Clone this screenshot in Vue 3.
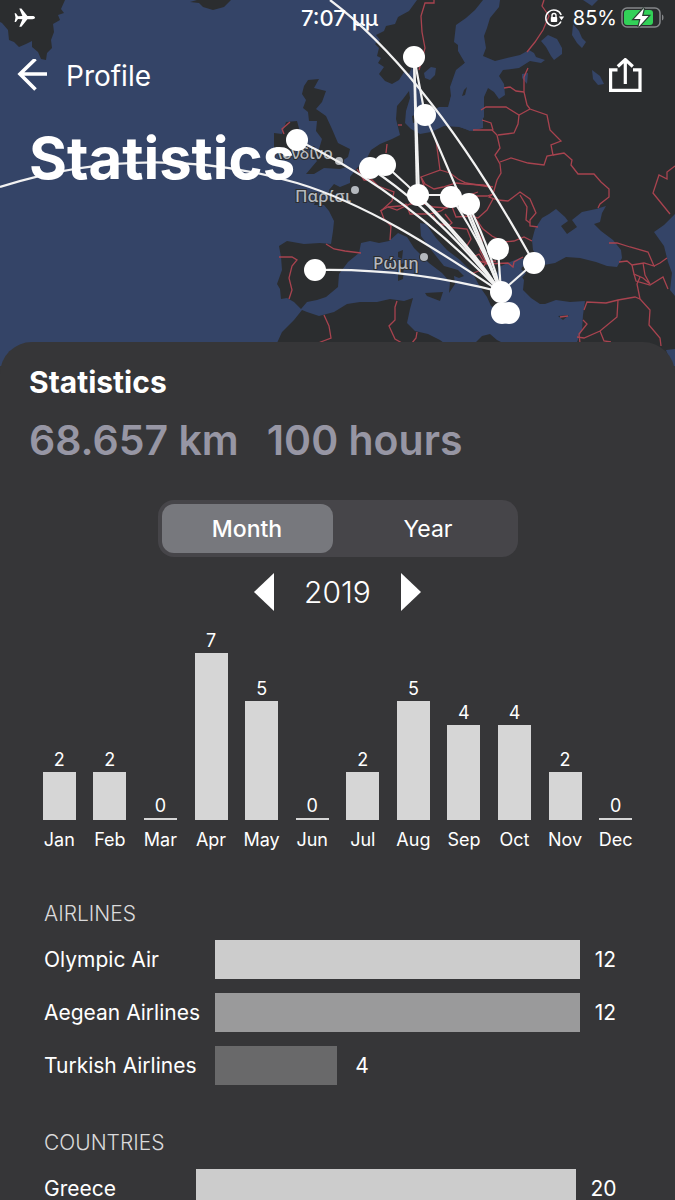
<template>
  <div class="screen">
    <header class="hero">
      <svg class="map" viewBox="0 0 675 366" preserveAspectRatio="xMidYMin slice" aria-hidden="true">
        <g class="land">
          <path v-for="(d, i) in land" :key="i" :d="d" />
        </g>
        <g class="sea">
          <path v-for="(d, i) in seas" :key="i" :d="d" />
        </g>
        <g class="land">
          <path v-for="(d, i) in islands" :key="i" :d="d" />
        </g>
        <g class="borders">
          <path v-for="(d, i) in borders" :key="i" :d="d" />
        </g>
        <g class="cities">
          <circle cx="339" cy="161" r="4" />
          <circle cx="355" cy="190" r="4" />
          <circle cx="424" cy="257" r="4" />
          <text x="272" y="159" font-size="16">Λονδίνο</text>
          <text x="295" y="202" font-size="17">Παρίσι</text>
          <text x="373" y="269" font-size="17">Ρώμη</text>
        </g>
        <g class="routes">
          <path v-for="(d, i) in routes" :key="i" :d="d" />
        </g>
        <g class="airports">
          <circle v-for="([x, y], i) in airports" :key="i" :cx="x" :cy="y" r="11" />
        </g>
      </svg>

      <div class="status">
        <div class="status-left">
          <svg width="22" height="20" viewBox="0 0 22 20" fill="#fff">
            <path d="M21 9.600c0-.9-1.200-1.600-2.600-1.600h-5L7.400.500H5.300L8.400 8 4 8.200 1.900 5.300H.600L1.500 9.600.600 14h1.300L4 11.100l4.400.200-3.100 7.400h2.100l6-7.500h5c1.400 0 2.600-.7 2.600-1.600z" />
          </svg>
        </div>
        <span class="time">7:07 μμ</span>
        <div class="status-right">
          <svg width="20" height="18" viewBox="0 0 20 18" fill="none" stroke="#fff">
            <path d="M16.200 6A8 8 0 1 0 16 12.500" stroke-width="1.500" />
            <path d="M13.800 7.400h5.400l-2.700 3.800z" fill="#fff" stroke="none" />
            <rect x="5.800" y="8" width="6.400" height="5" rx=".8" fill="#fff" stroke="none" />
            <path d="M7 8.500V6.500a2 2 0 0 1 4 0v2" stroke-width="1.400" />
          </svg>
          <span>85%</span>
          <svg class="battery" width="44" height="22" viewBox="0 0 44 22">
            <rect x="1" y="1" width="38" height="19" rx="5" fill="none" stroke="#85878a" stroke-width="1.500" />
            <path d="M41 7.500c2 .6 2 5.400 0 6z" fill="#85878a" />
            <rect x="3" y="3" width="29" height="15" rx="3" fill="#32d158" />
            <path class="bolt" d="M23 1 13 12h6.500L17.500 20 27.500 9H21z" />
          </svg>
        </div>
      </div>

      <nav class="nav">
        <button class="back" type="button">
          <svg width="30" height="34" viewBox="0 0 30 34" fill="none" stroke="#fff" stroke-width="3.600">
            <path d="M30 15H3M18.500 0 3 15l15.500 15.500" />
          </svg>
          Profile
        </button>
        <button class="share" type="button" aria-label="Share">
          <svg width="34" height="36" viewBox="0 0 34 36" fill="none" stroke="#fff" stroke-width="3.200">
            <path d="M9.500 11.800H2.600V32.400H32V11.800H25" />
            <path d="M17.300 26V2.500M9.800 8.500 17.300 1.600l7.500 6.900" />
          </svg>
        </button>
      </nav>

      <h1>Statistics</h1>
    </header>

    <main class="panel">
      <h2>Statistics</h2>
      <p class="totals">
        <span>68.657 km</span>
        <span>100 hours</span>
      </p>

      <div class="segmented">
        <button
          v-for="m in modes"
          :key="m"
          type="button"
          :class="{ active: m === mode }"
          @click="mode = m"
        >
          {{ m }}
        </button>
      </div>

      <div class="year">
        <button type="button" aria-label="Previous year" @click="year--">
          <svg width="20" height="38" viewBox="0 0 20 38"><path d="M20 0v38L0 19z" fill="#fff" /></svg>
        </button>
        <span>{{ year }}</span>
        <button type="button" aria-label="Next year" @click="year++">
          <svg width="20" height="38" viewBox="0 0 20 38"><path d="M0 0v38l20-19z" fill="#fff" /></svg>
        </button>
      </div>

      <div class="months">
        <div v-for="m in months" :key="m.name" class="month">
          <div class="column">
            <span>{{ m.flights }}</span>
            <div class="bar" :style="{ height: barHeight(m.flights) }"></div>
          </div>
          <span class="name">{{ m.name }}</span>
        </div>
      </div>

      <section v-for="g in groups" :key="g.title" class="group" :class="g.id">
        <h3>{{ g.title }}</h3>
        <div v-for="(row, i) in g.rows" :key="row.name" class="row">
          <span>{{ row.name }}</span>
          <div class="track">
            <div
              class="fill"
              :class="'shade-' + i"
              :style="{ width: (row.count / g.rows[0].count) * 100 + '%' }"
            ></div>
            <span class="count">{{ row.count }}</span>
          </div>
        </div>
      </section>
    </main>
  </div>
</template>

<script setup>
import { computed, ref } from "vue";

const modes = ["Month", "Year"];
const mode = ref("Month");
const year = ref(2019);

const months = [
  { name: "Jan", flights: 2 },
  { name: "Feb", flights: 2 },
  { name: "Mar", flights: 0 },
  { name: "Apr", flights: 7 },
  { name: "May", flights: 5 },
  { name: "Jun", flights: 0 },
  { name: "Jul", flights: 2 },
  { name: "Aug", flights: 5 },
  { name: "Sep", flights: 4 },
  { name: "Oct", flights: 4 },
  { name: "Nov", flights: 2 },
  { name: "Dec", flights: 0 },
];

const groups = [
  {
    id: "airlines",
    title: "AIRLINES",
    rows: [
      { name: "Olympic Air", count: 12 },
      { name: "Aegean Airlines", count: 12 },
      { name: "Turkish Airlines", count: 4 },
    ],
  },
  {
    id: "countries",
    title: "COUNTRIES",
    rows: [{ name: "Greece", count: 20 }],
  },
];

const maxFlights = computed(() => Math.max(...months.map((m) => m.flights)));

function barHeight(n) {
  return Math.round((n / maxFlights.value) * 167) + "px";
}

// map shapes, in the map's own 675 x 366 space
const land = [
  // Greenland / Iceland
  "M0 0H65L61 9 64 13 58 15 60 20 53 24 54 32 51 40 52 48 47 53 46 60 41 59 38 52 32 47 32 41 26 44 19 47 14 42 9 40 8 30 2 23 0 22z",
  "M190 2 197 0H231L224 7 213 10 203 7 199 3z",
  // Scandinavia
  "M417 0 409 11 398 17 395 24 386 26 384 31 376 35 380 40 375 44 379 48 377 56 381 58 378 63 384 67 379 74 385 81 392 84 399 80 404 72 409 74 412 67 415 77 420 92 423 105 431 112 439 107 449 107 451 96 450 87 456 70 466 62 484 0z",
  // mainland Europe and Asia
  "M483 0H675V366H583L577 342 582 330 583 315 585 301 570 302 556 300 545 304 540 304 531 298 523 290 524 280 520 274 522 267 536 262 520 258 510 262 499 267 497 275 503 285 507 297 505 306 499 310 491 306 487 297 480 287 472 272 460 260 447 250 436 238 426 224 420 223 421 236 432 251 444 266 458 270 464 276 459 278 454 276 455 284 449 293 450 282 442 273 429 263 414 248 407 237 398 233 389 241 379 243 370 241 361 243 359 253 348 262 339 274 338 287 326 297 317 300 307 302 301 309 294 302 287 298 281 299 280 289 277 284 282 270 281 257 279 246 287 241 304 244 320 243 331 244 333 231 334 221 329 211 324 205 314 205 316 200 329 199 329 190 334 184 340 187 350 183 350 177 357 168 366 160 371 150 380 144 392 139 400 135 398 127 396 119 397 106 403 99 409 91 410 98 406 111 405 123 411 129 420 134 431 132 444 126 459 127 472 131 483 128z",
  // north Africa
  "M277 343 282 332 294 320 302 310 307 312 319 316 334 312 347 304 360 302 377 302 390 299 404 301 413 298 410 309 407 323 415 331 428 334 440 340 444 343V366H277z",
  "M475 343 482 336 490 334 497 340 505 344V366H475z",
];

const seas = [
  // Baltic with the gulfs of Bothnia and Finland
  "M483 0H500L499 7 490 18 487 28 484 36 486 48 483 56 495 61 507 58 520 55 529 50 534 53 536 57 545 60 541 63 530 61 519 68 503 70 499 76 504 84 505 95 499 99 494 92 488 88 484 97 484 117 478 126 470 131 458 126 444 126 432 112 448 107 451 96 451 86 457 70 465 63 458 51 458 45 454 42 456 25 466 18 475 10z",
  "M424 73 431 67 436 68 435 75 430 80 425 78z",
  // Ladoga, Onega and the small lakes
  "M541 41 548 35 557 39 562 48 562 54 554 60 551 56 546 47z",
  "M573 24 579 31 582 38 586 42 582 48 577 43 572 35z",
  "M583 0H598L592 6z",
  "M592 70 600 76 604 84 598 85 593 79z",
  "M522 74 528 73 527 84 522 78z",
  // Black Sea and Azov
  "M544 265 533 250 532 240 535 229 542 218 549 214 556 209 565 217 568 221 561 226 567 234 577 227 572 220 582 212 596 209 606 206 602 213 600 222 594 224 601 231 613 240 621 250 622 258 617 267 607 266 596 262 580 258 566 257 555 263z",
  // Caspian
  "M675 214 664 225 654 232 664 246 668 262 672 273 670 290 675 296z",
  // Aegean
  "M498 268 515 265 526 273 520 280 525 298 534 304 529 309 505 309 506 295 502 285 498 277z",
  "M666 350 675 349V366H672z",
];

const islands = [
  // Britain and Ireland
  "M308 80 319 79 314 88 326 91 322 102 316 109 326 116 332 129 338 143 350 149 348 157 336 165 350 166 340 169 324 168 314 174 306 174 317 161 311 153 319 149 322 139 316 131 317 121 309 121 308 112 303 108 306 100 302 94 304 86z",
  "M274 133 282 134 286 122 297 121 300 132 297 147 285 153 274 149z",
  // Corsica, Sardinia, Sicily, the Danish islands, Gotland, Cyprus
  "M398 252 403 250 402 259 398 257z",
  "M398 265 404 263 403 279 398 281z",
  "M425 293 443 292 440 301 427 296z",
  "M412 116 420 113 419 122 413 123z",
  "M464 90 467 87 465 95 462 96z",
  "M558 316 569 315 563 320z",
];

const borders = [
  "M434 0V3L425 3 421 16 422 32 425 48 419 70",
  "M544 0 542 6 549 16 543 30 535 42 527 52",
  "M528 68 524 77 524 92 527 105 530 109 547 115 550 130 561 141 551 145 553 155 547 156 544 165 528 163 511 158 500 162",
  "M504 88 510 87 516 91 524 92",
  "M481 110 486 107H506L519 115 530 109",
  "M519 115 518 124 514 133 498 135",
  "M473 130 492 130 497 135 500 148 495 155 500 164 501 173 497 180 493 194 489 197 498 200 508 201 520 192 530 199 536 213 530 220 530 226 538 227",
  "M482 120 491 123 493 130",
  "M553 155 564 153 572 160 571 165 578 174H594L601 182 609 189V197L600 204 598 208",
  "M387 144 386 153",
  "M436 140 438 155 440 170 421 177 425 184 434 189 443 187 456 183 465 184 483 185 493 187",
  "M440 170 450 173 458 179 466 183 490 187 493 194 487 196 470 196",
  "M357 169 364 180 372 180 378 186 394 192 392 201 381 211 384 219 391 226 390 240",
  "M380 211 388 207 397 210 410 204 421 203 434 207 447 208 451 203 461 198 478 192",
  "M388 207 400 206 406 204 410 214 430 214 441 211 451 204 456 217 472 216 478 218 487 210 493 199",
  "M421 177 424 186 416 190 414 197",
  "M433 215 437 223 448 226 452 223 445 214M448 227 467 229 471 239 465 249 472 258 479 254 484 262 496 261",
  "M476 219 483 229 492 236 504 242 514 241 524 237 532 241",
  "M478 232 482 240 480 251 487 264 508 263 513 267 514 262 523 257",
  "M471 274 481 270 486 263 475 260",
  "M520 195 527 207 526 220 530 223",
  "M279 257H292L297 260 292 266 289 278 292 290 289 299",
  "M326 244 334 249 345 251 361 253",
  "M324 315 329 326 331 338 318 343",
  "M397 301 395 307V320L389 326 395 339 402 343",
  "M417 332 416 338 412 343",
  "M284 134 282 129 290 122",
  "M398 125H402",
  "M609 243 617 243 630 247 648 252 654 266 644 263 632 265 627 261 619 262",
  "M654 266 660 263 667 258M632 265 634 274 643 278 650 284 645 275 643 263",
  "M634 274 636 281 650 285 663 277 668 289M640 277 637 284 640 299 650 310 649 325 660 338 661 346",
  "M584 310 587 302 606 303 618 300 635 297 640 299M618 300 617 317 600 331 584 338 577 337M600 331 604 341 611 342M583 320 587 324 579 334 580 343",
  "M560 317 568 316",
  "M675 166 667 172V179L659 175 653 193 670 214",
];

const routes = [
  "M330 0Q431 76 534 263",
  "M0 187C100 155 200 155 297 183C370 205 440 252 501 292",
  "M297 140Q403 190 501 292",
  "M370 168Q438 213 501 292",
  "M385 165Q445 217 501 292",
  "M418 195Q464 237 501 292",
  "M414 57 417 195",
  "M414 57 425 115 501 292",
  "M414 57 419 195",
  "M418 195H451L468 204",
  "M451 197Q480 240 501 292",
  "M468 204Q490 248 501 292",
  "M466 204Q484 248 501 292",
  "M498 249 501 292",
  "M534 263 501 292",
  "M315 270Q410 268 501 292",
];

const airports = [
  [414, 57],
  [425, 115],
  [297, 140],
  [370, 168],
  [385, 165],
  [418, 195],
  [451, 197],
  [469, 204],
  [498, 249],
  [534, 263],
  [315, 270],
  [501, 292],
  [502, 313],
  [509, 313],
];
</script>

<style>
body {
  margin: 0;
  background: #363638;
}
</style>

<style scoped>
.screen {
  display: flex;
  flex-direction: column;
  height: 100vh;
  overflow-y: auto;
  scrollbar-width: none;
  background: #363638;
  color: #fff;
  font-family: Inter, "Liberation Sans", sans-serif;
}
button {
  padding: 0;
  border: none;
  background: none;
  color: inherit;
  font: inherit;
  cursor: pointer;
}
svg {
  display: block;
}

.hero {
  position: relative;
  flex: none;
  box-sizing: border-box;
  height: 342px;
  background: #344467;
}
.map {
  position: absolute;
  top: 0;
  left: 0;
  width: 100%;
  height: 366px;
  background: #344467;
}
.land {
  fill: #2b2d2f;
}
.sea {
  fill: #344467;
}
.borders,
.routes {
  fill: none;
}
.borders {
  stroke: #a8434f;
  stroke-width: 1.3;
}
.routes {
  stroke: #f2f2f2;
  stroke-width: 2.2;
}
.airports {
  fill: #fff;
}
.cities {
  fill: #b4b8bd;
  font-family: "Noto Sans", sans-serif;
  font-weight: 500;
  stroke: #2b2d2f;
  stroke-width: 2;
  paint-order: stroke;
}
.status,
.nav,
h1 {
  position: relative;
}
.status {
  display: grid;
  grid-template-columns: 1fr auto 1fr;
  align-items: center;
  height: 36px;
  padding: 0 10px 0 14px;
  font-size: 20px;
}
.time {
  font-size: 22px;
  font-weight: 500;
}
.status-right {
  display: flex;
  align-items: center;
  justify-content: flex-end;
  gap: 8px;
}
.battery {
  margin-left: -4px;
}
.bolt {
  fill: #fff;
  stroke: #2c3d33;
  stroke-width: 2.4;
  paint-order: stroke;
}
.nav {
  display: flex;
  align-items: center;
  justify-content: space-between;
  height: 80px;
  padding: 0 33px 0 17px;
}
.back {
  display: flex;
  align-items: center;
  gap: 19px;
  font-size: 28px;
}
h1 {
  margin: 7px 0 0;
  padding: 0 29px;
  font-size: 58px;
  line-height: 70px;
  font-weight: 700;
}

.panel {
  position: relative;
  flex: none;
  padding: 23px 29px 40px;
  border-radius: 32px 32px 0 0;
  background: #363638;
}
h2 {
  margin: 0;
  font-size: 30px;
  line-height: 34px;
  font-weight: 700;
}
.totals {
  display: flex;
  gap: 28px;
  margin: 17px 0 36px;
  color: #9796a4;
  font-size: 41px;
  line-height: 48px;
  font-weight: 600;
}
.segmented {
  display: grid;
  grid-template-columns: 1fr 1fr;
  gap: 10px;
  box-sizing: border-box;
  max-width: 360px;
  height: 57px;
  margin: 0 auto;
  padding: 4px;
  border-radius: 16px;
  background: #464549;
  font-size: 23px;
}
.segmented button {
  border-radius: 12px;
}
.segmented .active {
  background: #77787d;
  font-weight: 500;
}
.year {
  display: flex;
  align-items: center;
  justify-content: center;
  gap: 30px;
  margin-top: 16px;
  font-size: 30px;
  line-height: 38px;
  font-weight: 300;
}
.months {
  display: grid;
  grid-template-columns: repeat(12, 1fr);
  margin: 19px 5px 0;
  font-size: 18px;
  line-height: 20px;
}
.month {
  display: flex;
  flex-direction: column;
  align-items: center;
  gap: 10px;
}
.column {
  display: flex;
  flex-direction: column;
  align-items: center;
  justify-content: flex-end;
  gap: 2px;
  height: 190px;
}
.bar {
  width: 33px;
  min-height: 2px;
  background: #d6d6d6;
}

.group {
  padding: 0 15px;
  margin-top: 46px;
}
.airlines {
  --label: 171px;
  --count: 51px;
  margin-top: 52px;
}
.countries {
  --label: 152px;
  --count: 55px;
}
h3 {
  margin: 0 0 14px;
  color: #dadadb;
  font-size: 21px;
  line-height: 24px;
  font-weight: 300;
}
.row {
  display: grid;
  grid-template-columns: var(--label) 1fr;
  align-items: center;
  margin-bottom: 14px;
  font-size: 21px;
}
.row:last-child {
  margin-bottom: 0;
}
.track {
  display: flex;
  align-items: center;
  padding-right: var(--count);
}
.fill {
  flex: none;
  height: 39px;
}
.shade-0 {
  background: #cccccc;
}
.shade-1 {
  background: #9a9a9b;
}
.shade-2 {
  background: #69696a;
}
.count {
  flex: none;
  width: var(--count);
  margin-right: calc(var(--count) * -1);
  text-align: center;
}
</style>
